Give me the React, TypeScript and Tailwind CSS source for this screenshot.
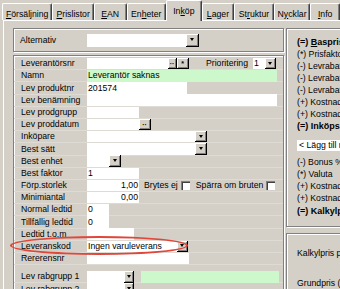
import React from "react";

type Tab = { label: string; key: number; width: string; selected?: boolean };

const tabs: Tab[] = [
  { label: "Försäljning", key: 0, width: "w-[51px]" },
  { label: "Prislistor", key: 0, width: "w-[42px]" },
  { label: "EAN", key: 0, width: "w-[33px]" },
  { label: "Enheter", key: 2, width: "w-[40px]" },
  { label: "Inköp", key: 2, width: "w-[36px]", selected: true },
  { label: "Lager", key: 0, width: "w-[33px]" },
  { label: "Struktur", key: 2, width: "w-[40px]" },
  { label: "Nycklar", key: 1, width: "w-[37px]" },
  { label: "Info", key: 0, width: "w-[30px]" },
];

function Accel({ text, index }: { text: string; index: number }) {
  return (
    <span>
      {text.slice(0, index)}
      <span className="underline">{text[index]}</span>
      {text.slice(index + 1)}
    </span>
  );
}

function TabStrip() {
  return (
    <div className="flex h-[20px] items-end pl-[2px]">
      {tabs.map((t) =>
        t.selected ? (
          <div
            key={t.label}
            className={`${t.width} relative z-10 -mb-[1px] flex h-[21px] items-start justify-center rounded-t-[2px] border-l border-t border-r border-l-white border-t-white border-r-[#404040] bg-[#d4d0c8] pt-[4px] shadow-[inset_-1px_0_0_#808080]`}
          >
            <Accel text={t.label} index={t.key} />
          </div>
        ) : (
          <div
            key={t.label}
            className={`${t.width} flex h-[17px] items-start justify-center rounded-t-[2px] border-l border-t border-r border-l-white border-t-white border-r-[#404040] pt-[4px] shadow-[inset_-1px_0_0_#808080]`}
          >
            <Accel text={t.label} index={t.key} />
          </div>
        )
      )}
    </div>
  );
}

function Field({ w, green, children, right }: { w: string; green?: boolean; children?: React.ReactNode; right?: boolean }) {
  return (
    <div
      className={`${w} flex h-[11.5px] items-center px-[1px] leading-none ${green ? "bg-[#ccf8cc]" : "bg-white"} ${right ? "justify-end" : ""}`}
    >
      {children}
    </div>
  );
}

function DropButton({ w = "w-[12px]", h = "h-[11.5px]" }: { w?: string; h?: string }) {
  return (
    <div
      className={`${w} ${h} flex items-center justify-center border-r border-b border-r-black border-b-black bg-[#d4d0c8] shadow-[inset_1px_1px_0_white,inset_-1px_-1px_0_#808080]`}
    >
      <div className="h-0 w-0 border-x-[2.5px] border-t-[3px] border-x-transparent border-t-black" />
    </div>
  );
}

function SmallButton({ w, label }: { w: string; label: string }) {
  return (
    <div
      className={`${w} flex h-[11.5px] items-center justify-center border-r border-b border-r-black border-b-black bg-[#d4d0c8] text-[7px] font-bold leading-none shadow-[inset_1px_1px_0_white,inset_-1px_-1px_0_#808080]`}
    >
      {label}
    </div>
  );
}

function CheckBox() {
  return <div className="h-[9px] w-[9px] border-l border-t border-l-[#808080] border-t-[#808080] bg-white shadow-[inset_1px_1px_0_#404040]" />;
}

function Row({ label, children }: { label: string; children?: React.ReactNode }) {
  return (
    <div className="flex h-[12.2px] items-center border-b border-b-[#dedbd5]">
      <div className="w-[73px] shrink-0 pl-[7px] leading-none">{label}</div>
      <div className="flex h-full items-center">{children}</div>
    </div>
  );
}

const groupBox = "border border-[#808080] shadow-[inset_1px_1px_0_white,1px_1px_0_white]";

const priceLines: { text: string; bold?: boolean }[] = [
  { text: "(=) Baspris", bold: true },
  { text: "(*) Prisfaktor" },
  { text: "(-) Levrabatt 1" },
  { text: "(-) Levrabatt 2" },
  { text: "(-) Levrabatt 3" },
  { text: "(+) Kostnad 1" },
  { text: "(+) Kostnad 2" },
  { text: "(=) Inköpspris", bold: true },
];

const calcLines: { text: string; bold?: boolean }[] = [
  { text: "(-) Bonus %" },
  { text: "(*) Valuta" },
  { text: "(+) Kostnad 3" },
  { text: "(+) Kostnad 4" },
  { text: "(=) Kalkylpris", bold: true },
];

export default function App() {
  return (
    <div className="h-[289px] w-[340px] overflow-hidden bg-[#d4d0c8] font-['Liberation_Sans',Arial,sans-serif] text-[8.7px] text-black">
      <TabStrip />
      <div className="ml-[3px] flex h-full gap-[2px] border-l border-t border-l-white border-t-white pl-[9px] pt-[7px]">
        <div className="relative flex w-[271px] shrink-0 flex-col">
          <div className={`${groupBox} flex h-[24px] items-center`}>
            <div className="w-[73px] shrink-0 pl-[6px] leading-none">Alternativ</div>
            <div className="h-[13px] w-[99px] bg-white" />
            <DropButton w="w-[13px]" h="h-[13px]" />
          </div>

          <div className={`${groupBox} mt-[3px] flex flex-1 flex-col pt-[2px]`}>
            <Row label="Leverantörsnr">
              <Field w="w-[81px]" />
              <SmallButton w="w-[9px]" label="··" />
              <SmallButton w="w-[12px]" label="*" />
              <span className="ml-[17px] leading-none">Prioritering</span>
              <div className="ml-[5px] flex">
                <Field w="w-[12px]">1</Field>
                <DropButton w="w-[11px]" />
              </div>
            </Row>
            <Row label="Namn">
              <Field w="w-[190px]" green>
                Leverantör saknas
              </Field>
            </Row>
            <Row label="Lev produktnr">
              <Field w="w-[100px]">201574</Field>
            </Row>
            <Row label="Lev benämning">
              <Field w="w-[190px]" />
            </Row>
            <Row label="Lev prodgrupp">
              <Field w="w-[52px]" />
            </Row>
            <Row label="Lev proddatum">
              <Field w="w-[52px]" />
              <SmallButton w="w-[12px]" label="··" />
            </Row>
            <Row label="Inköpare">
              <Field w="w-[108px]" />
              <DropButton />
            </Row>
            <Row label="Best sätt">
              <Field w="w-[108px]" />
              <DropButton />
            </Row>
            <Row label="Best enhet">
              <Field w="w-[22px]" />
              <DropButton />
            </Row>
            <Row label="Best faktor">
              <Field w="w-[52px]">1</Field>
            </Row>
            <Row label="Förp.storlek">
              <Field w="w-[52px]" right>
                1,00
              </Field>
              <span className="ml-[5px] leading-none">Brytes ej</span>
              <div className="ml-[3px]">
                <CheckBox />
              </div>
              <span className="ml-[6px] leading-none">Spärra om bruten</span>
              <div className="ml-[3px]">
                <CheckBox />
              </div>
            </Row>
            <Row label="Minimiantal">
              <Field w="w-[52px]" right>
                0,00
              </Field>
            </Row>
            <Row label="Normal ledtid">
              <Field w="w-[22px]">0</Field>
            </Row>
            <Row label="Tillfällig ledtid">
              <Field w="w-[22px]">0</Field>
            </Row>
            <Row label="Ledtid t.o.m">
              <Field w="w-[47px]" />
            </Row>
            <Row label="Leveranskod">
              <Field w="w-[90px]">Ingen varuleverans</Field>
              <DropButton w="w-[11px]" />
            </Row>
            <Row label="Rererensnr">
              <Field w="w-[102px]" />
            </Row>
            <div className="mt-[6px]">
              <Row label="Lev rabgrupp 1">
                <Field w="w-[37px]" />
                <DropButton w="w-[10px]" />
                <div className="ml-[7px] h-[11.5px] w-[138px] bg-[#ccf8cc]" />
              </Row>
              <Row label="Lev rabgrupp 2">
                <Field w="w-[37px]" />
                <DropButton w="w-[10px]" />
              </Row>
            </div>
          </div>

          <div className="absolute left-[-3px] top-[208px] h-[19px] w-[178px] rounded-[50%] border-2 border-[#e0463a]" />
        </div>

        <div className="flex w-[120px] shrink-0 flex-col">
          <div className={`${groupBox} flex flex-col pb-[9px] pl-[10px] pt-[7px]`}>
            {priceLines.map((l, i) => (
              <div key={i} className={`flex h-[12.1px] items-center whitespace-nowrap leading-none ${l.bold ? "text-[9px] font-bold" : ""}`}>
                {i === 0 ? (
                  <span>
                    (=) <span className="underline">B</span>aspris
                  </span>
                ) : (
                  l.text
                )}
              </div>
            ))}
            <div className="mt-[7px] flex h-[11px] items-center whitespace-nowrap bg-white pl-[2px] leading-none">&lt; Lägg till nytt</div>
            <div className="mt-[5px] flex flex-col">
              {calcLines.map((l, i) => (
                <div key={i} className={`flex h-[12.3px] items-center whitespace-nowrap leading-none ${l.bold ? "text-[9px] font-bold" : ""}`}>
                  {l.text}
                </div>
              ))}
            </div>
          </div>
          <div className={`${groupBox} mt-[6px] flex flex-1 flex-col pl-[10px] pt-[15px]`}>
            <div className="whitespace-nowrap leading-none">Kalkylpris per enhet</div>
            <div className="mt-[21px] whitespace-nowrap leading-none">Grundpris (exkl)</div>
          </div>
        </div>
      </div>
    </div>
  );
}
